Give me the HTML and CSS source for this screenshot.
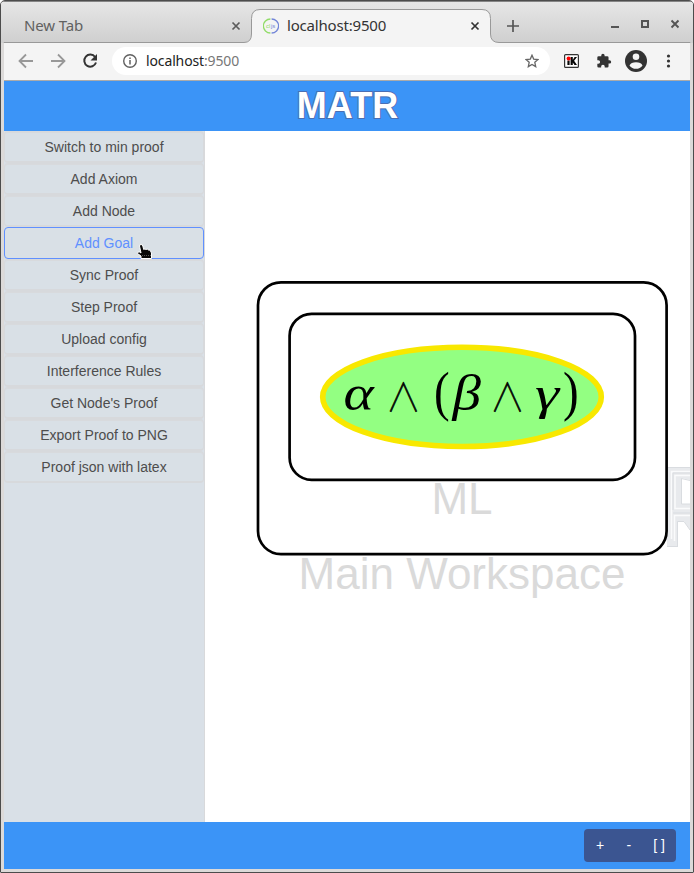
FILE: index.html
```html
<!DOCTYPE html>
<html lang="en">
<head>
<meta charset="utf-8">
<title>MATR</title>
<link rel="stylesheet" href="styles.css">
</head>
<body>
<div class="window">
  <div class="tabs">
    <svg class="tab-shape" width="694" height="43" viewBox="0 0 694 43">
      <path d="M4 42.5H244Q251.500 42.500 251.500 34V18.500Q251.500 9.500 260 9.500H482Q490.500 9.500 490.500 18.500V34Q490.500 42.500 499 42.500H690V44H4Z" fill="#f4f4f4" stroke="#999"/>
    </svg>
    <div class="tab tab-idle"><span class="tab-title">New Tab</span>
      <svg width="10" height="10" viewBox="0 0 10 10"><path d="M1.500 1.500L8.500 8.500M8.500 1.500L1.500 8.500" stroke="#5b5b5b" stroke-width="1.700"/></svg>
    </div>
    <div class="tab tab-active">
      <svg class="favicon" width="16" height="16" viewBox="0 0 16 16"><g fill="none"><path d="M7.400 1A7 7 0 0 0 7.400 15" stroke="#91dc68" stroke-width="1.300"/><path d="M8.600 1A7 7 0 0 1 8.600 15" stroke="#7386d8" stroke-width="1.300"/></g><text x="3" y="10" font-size="6" fill="#91dc68">cl</text><text x="8" y="10" font-size="6" fill="#7386d8">js</text></svg>
      <span class="tab-title">localhost:9500</span>
      <svg width="10" height="10" viewBox="0 0 10 10"><path d="M1.500 1.500L8.500 8.500M8.500 1.500L1.500 8.500" stroke="#333" stroke-width="1.700"/></svg>
    </div>
    <svg class="plus" width="12" height="12" viewBox="0 0 12 12"><path d="M6 0V12M0 6H12" stroke="#555" stroke-width="1.700"/></svg>
    <div class="controls">
      <svg width="10" height="10" viewBox="0 0 10 10"><path d="M1 8H9" stroke="#555" stroke-width="2"/></svg>
      <svg width="10" height="10" viewBox="0 0 10 10"><path d="M2 2H8V8H2Z" fill="none" stroke="#555" stroke-width="2"/></svg>
      <svg width="10" height="10" viewBox="0 0 10 10"><path d="M1.500 1.500L8.500 8.500M8.500 1.500L1.500 8.500" stroke="#555" stroke-width="1.900"/></svg>
    </div>
  </div>
  <div class="toolbar">
    <svg width="96" height="18" viewBox="0 0 96 18">
      <g fill="none" stroke="#989898" stroke-width="1.800"><path d="M16 9H3M9 2.500L2.500 9L9 15.500M34 9H47M41 2.500L47.500 9L41 15.500"/></g>
      <path d="M78.100 5A6 6 0 1 0 79 10.500" fill="none" stroke="#333" stroke-width="2"/><path d="M80 2V8.500H73.500Z" fill="#333"/>
    </svg>
    <div class="omnibox">
      <svg width="14" height="14" viewBox="0 0 14 14"><circle cx="7" cy="7" r="6.300" fill="none" stroke="#616161" stroke-width="1.400"/><path d="M7 6V10.500M7 3.500V5" stroke="#616161" stroke-width="1.500"/></svg>
      <span class="url">localhost<span class="port">:9500</span></span>
      <svg class="star" width="14" height="14" viewBox="0 0 14 14"><path d="M7 1.200L8.700 5.100L13 5.500L9.800 8.300L10.700 12.600L7 10.400L3.300 12.600L4.200 8.300L1 5.500L5.300 5.100Z" fill="none" stroke="#666" stroke-width="1.300"/></svg>
    </div>
    <svg class="tools" width="124" height="24" viewBox="0 0 124 24">
      <rect x="8.600" y="5.600" width="13.800" height="12.800" rx="1" fill="#fff" stroke="#333" stroke-width="1.200"/>
      <path d="M11.400 11.500H13.600V16H11.400ZM14.600 8H16.800V11L18.600 8H21L18.100 11.800L21 16H18.500L16.800 13.500V16H14.600Z" fill="#080808"/><circle cx="12.600" cy="9.400" r="2" fill="#f00"/>
      <g transform="translate(40 4) scale(.66)" fill="#333"><path d="M20.500 11H19V7a2 2 0 0 0-2-2h-4V3.500a2.500 2.500 0 0 0-5 0V5H4a2 2 0 0 0-2 2v3.800h1.500a2.700 2.700 0 0 1 0 5.400H2V20a2 2 0 0 0 2 2h3.800v-1.500a2.700 2.700 0 0 1 5.400 0V22H17a2 2 0 0 0 2-2v-4h1.500a2.500 2.500 0 0 0 0-5Z"/></g>
      <circle cx="80" cy="12" r="11" fill="#333"/><circle cx="80" cy="7.800" r="3.300" fill="#f4f4f4"/><path d="M73.500 16.400Q75 13.200 80 13.200T86.500 16.400Q84 19.800 80 19.800T73.500 16.400Z" fill="#f4f4f4"/>
      <g fill="#333"><circle cx="112.500" cy="7" r="1.600"/><circle cx="112.500" cy="12" r="1.600"/><circle cx="112.500" cy="17" r="1.600"/></g>
    </svg>
  </div>
  <header class="banner"><h1>MATR</h1></header>
  <main class="content">
    <nav class="sidebar">
      <button>Switch to min proof</button>
      <button>Add Axiom</button>
      <button>Add Node</button>
      <button class="hover">Add Goal</button>
      <button>Sync Proof</button>
      <button>Step Proof</button>
      <button>Upload config</button>
      <button>Interference Rules</button>
      <button>Get Node's Proof</button>
      <button>Export Proof to PNG</button>
      <button>Proof json with latex</button>
    </nav>
    <svg class="graph" width="485" height="691" viewBox="205 131 485 691">
      <path d="M667 467H690V480L682 478V504H690V530L684 521H678V547H667Z" fill="#e8eaed"/>
      <path d="M690 471.500H671.500V539M690 475.500H675V508.500H690M690 515.500H674.500V541" fill="none" stroke="#fafbfc" stroke-width="1.500"/>
      <path d="M667 467.500H690M690 473H673V510M690 480.500L681.500 478.500V504H690M690 513H673M677.500 547V521.500H684L690 530M667 546.500H677.500" fill="none" stroke="#d9dce0"/>
      <rect x="258" y="282.300" width="408.600" height="271.800" rx="23" fill="#fff" stroke="#000" stroke-width="2.700"/>
      <rect x="289.600" y="313.800" width="345.400" height="166" rx="22" fill="#fff" stroke="#000" stroke-width="2.700"/>
      <ellipse cx="462" cy="396.900" rx="139.300" ry="49.600" fill="#93ff82" stroke="#f8e800" stroke-width="5.600"/>
      <g class="formula">
        <text transform="translate(343.500 409.500) scale(1.130 1)">α</text>
        <text class="wedge" transform="translate(403.500 411) scale(.83 .92)">∧</text>
        <text class="paren" transform="translate(434 410) scale(.87 1)">(</text>
        <text transform="translate(452.500 409.500) scale(1.120 1)">β</text>
        <text class="wedge" transform="translate(507.500 411) scale(.83 .92)">∧</text>
        <text class="gamma" transform="translate(535 408.500) scale(1.300 1)">γ</text>
        <text class="paren" transform="translate(563 410) scale(.87 1)">)</text>
      </g>
      <g class="labels"><text x="462" y="514">ML</text><text x="462" y="589">Main Workspace</text></g>
    </svg>
    <svg class="pointer" width="17" height="17" viewBox="0 0 17 17"><path d="M5 1.500Q6.500 1.500 6.800 3L7.700 6.500Q9 5.500 9.800 6.500Q11.500 5.500 12.300 7Q14 6.500 14.500 8L15.500 10V15.500H5V13L1.500 10.500Q1 8.500 3.500 9L5 10L3.500 3Q3.500 1.500 5 1.500Z" fill="#080808" stroke="#fff"/><path d="M6 12.500H15" stroke="#555" stroke-dasharray="1 1"/></svg>
  </main>
  <footer class="footer"><div class="zoom"><span>+</span><span>-</span><span>[ ]</span></div></footer>
</div>
</body>
</html>
```
FILE: styles.css
```css
* { box-sizing: border-box; }
body { margin: 0; background: #fff; font-family: "Liberation Sans", Arial, sans-serif; }
svg { display: block; flex: none; }
.window {
  width: 694px; height: 873px; padding: 0 3px 3px; overflow: hidden;
  display: flex; flex-direction: column; position: relative;
  border: 1px solid #4c4c4c; border-radius: 5px 5px 1px 1px;
  background: #dcdad9;
}
.tabs {
  height: 42px; flex: none; margin: 0 -3px; padding: 0 13px 0 23px; position: relative;
  display: flex; align-items: center;
  background: linear-gradient(#e6e6e6, #cfcfcf); border-top: 1px solid #858585;
}
.tab-shape { position: absolute; left: -1px; top: -2px; }
.tab { position: relative; display: flex; align-items: center; justify-content: space-between; padding-top: 6px; font: 15px "Noto Sans", sans-serif; }
.tab-idle { width: 217px; color: #616161; }
.tab-active { width: 217px; margin-left: 22px; color: #333; }
.tab-title { position: relative; top: -1px; }
.tab-active .tab-title { margin: 0 auto 0 8px; letter-spacing: -.19px; }
.tab-idle .tab-title { letter-spacing: -.15px; }
.favicon text { font-family: "Liberation Sans", sans-serif; }
.plus { position: relative; margin: 6px 0 0 27px; }
.controls { position: relative; display: flex; gap: 20px; margin: 3px 0 0 auto; }
.toolbar { height: 38px; flex: none; display: flex; align-items: center; background: #f4f4f4; border-bottom: 1px solid #ababab; padding: 0 0 2px 13px; }
.omnibox { width: 438px; height: 28px; margin-left: -1px; padding: 0 11px; border-radius: 14px; background: #fff; display: flex; align-items: center; }
.url { margin-left: 9px; font: 14px "Noto Sans", sans-serif; color: #222; letter-spacing: -.13px; }
.port { color: #777; }
.star { margin-left: auto; }
.tools { margin-left: 6px; }
.banner { height: 50px; flex: none; background: #3b94f7; text-align: center; }
.banner h1 { margin: 0; padding-left: 1px; font-size: 36px; line-height: 49px; color: #fff; -webkit-text-stroke: 2px #4b6fb4; paint-order: stroke fill; }
.content { height: 691px; flex: none; display: flex; position: relative; background: #fff; }
.sidebar { width: 201px; flex: none; padding-right: 1px; background: #d9e0e7; border-right: 1px solid #d8d9db; }
.sidebar button {
  display: block; width: 200px; height: 32px; padding: 1px 0 0;
  border: 1px solid #d7d9dc; border-bottom-width: 2px; border-radius: 4px; box-shadow: inset 0 1px #d8dadd;
  background: #d9e0e6; color: #4d4d4d; font: 14px "Liberation Sans", Arial, sans-serif; text-align: center;
}
.sidebar .hover { color: #6090ff; border: 1px solid #6090ff; box-shadow: none; padding: 0; }
.pointer { position: absolute; left: 132px; top: 112px; }
.formula { font-family: "Liberation Serif", serif; font-size: 51px; font-style: italic; }
.formula .wedge { font-family: "Noto Sans CJK JP", sans-serif; font-weight: 100; font-size: 42px; font-style: normal; text-anchor: middle; stroke: #000; stroke-width: .7px; }
.formula .gamma { font-size: 47px; }
.formula .paren { font-size: 54px; font-style: normal; }
.labels { font: 44px "Liberation Sans", Arial, sans-serif; fill: #dadada; text-anchor: middle; }
.footer { height: 47px; flex: none; display: flex; justify-content: flex-end; align-items: center; padding-right: 14px; background: #3b94f7; }
.zoom { width: 92px; height: 33px; padding: 0 11px 2px 12px; border-radius: 4px; background: #3b5591; color: #fff; font-size: 14px; display: flex; align-items: center; justify-content: space-between; }
```
